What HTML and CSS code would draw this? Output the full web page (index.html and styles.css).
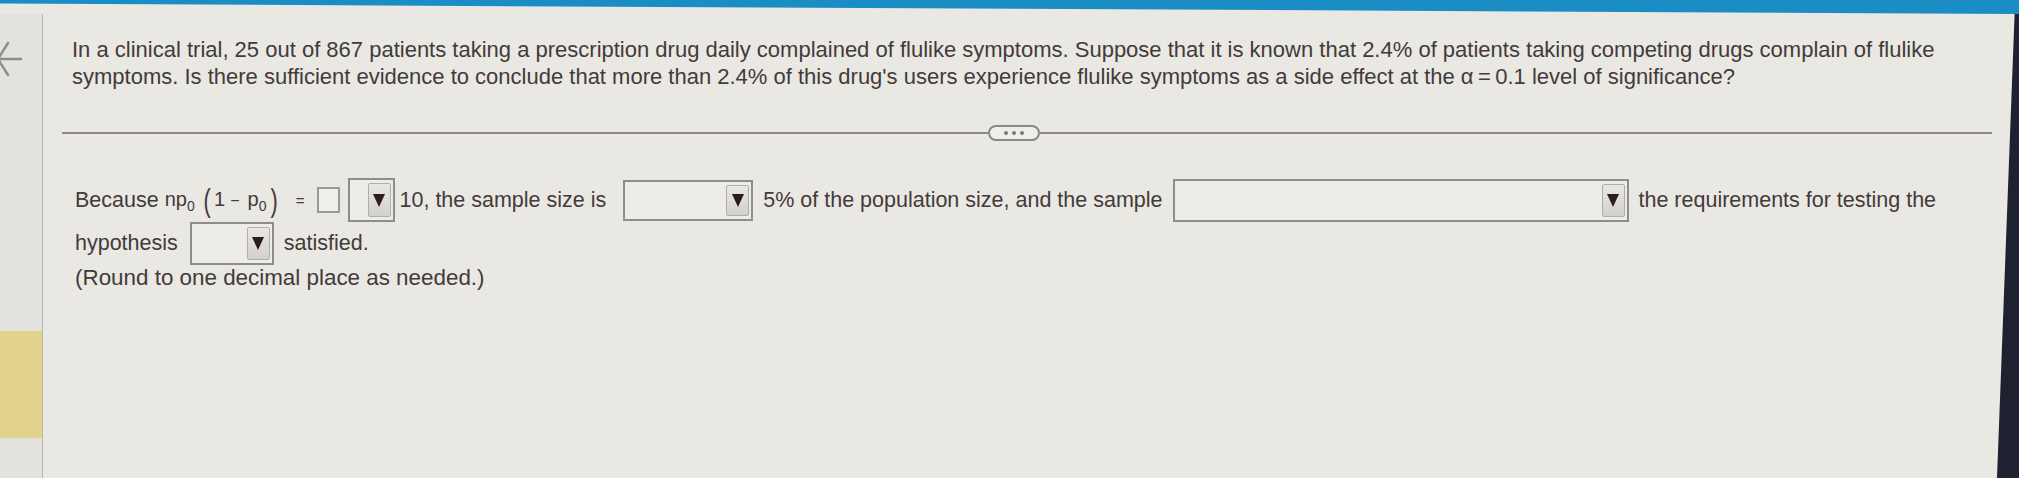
FILE: index.html
```html
<!DOCTYPE html>
<html lang="en">
<head>
<meta charset="utf-8">
<title>Hypothesis test question</title>
<link rel="stylesheet" href="styles.css">
</head>
<body>
<div class="screen">
  <div class="topbar"></div>
  <div class="frame">
    <aside class="sidebar">
      <svg class="back" viewBox="0 0 24 34" aria-hidden="true">
        <path d="M-2 17 L8 1 M-2 17 L8 33 M-2 17 L21 17" fill="none" stroke="#8f8d8a" stroke-width="2.4" stroke-linecap="round"/>
      </svg>
      <div class="flag"></div>
    </aside>
    <main class="content">
      <p class="question">In a clinical trial, 25 out of 867 patients taking a prescription drug daily complained of flulike symptoms. Suppose that it is known that 2.4% of patients taking competing drugs complain of flulike symptoms. Is there sufficient evidence to conclude that more than 2.4% of this drug's users experience flulike symptoms as a side effect at the α&#8201;=&#8201;0.1 level of significance?</p>
      <div class="divider">
        <span class="rule-l"></span>
        <span class="more"><i></i><i></i><i></i></span>
        <span class="rule-r"></span>
      </div>
      <div class="answer">
        <div class="row row-a">
          <span>Because</span>
          <span class="math">np<sub>0</sub><span class="paren open">(</span><span class="one">1</span><span class="minus">−</span>p<sub>0</sub><span class="paren close">)</span><span class="eq">=</span></span>
          <span class="box"></span>
          <span class="sel s1"><span class="btn"><i></i></span></span>
          <span class="t-10">10, the sample size is</span>
          <span class="sel s3"><span class="btn"><i></i></span></span>
          <span class="gap">5% of the population size, and the sample</span>
          <span class="sel s4"><span class="btn"><i></i></span></span>
          <span class="gap">the requirements for testing the</span>
        </div>
        <div class="row row-b">
          <span>hypothesis</span>
          <span class="sel s2"><span class="btn"><i></i></span></span>
          <span class="gap">satisfied.</span>
        </div>
        <div class="note">(Round to one decimal place as needed.)</div>
      </div>
    </main>
    <div class="edge"></div>
  </div>
</div>
</body>
</html>
```

FILE: styles.css
```css
* { box-sizing: border-box; }

html, body {
  margin: 0;
  height: 100%;
}

body {
  background: #eae8e2;
  font-family: "Liberation Sans", Arial, sans-serif;
  color: #433a3b;
  overflow: hidden;
}

.screen {
  display: flex;
  flex-direction: column;
  height: 478px;
}

.topbar {
  flex: none;
  height: 14px;
  background: #1a8dc5;
  clip-path: polygon(0 0, 100% 0, 100% 100%, 0 25%);
}

.frame {
  flex: 1;
  display: flex;
}

.sidebar {
  flex: none;
  width: 43px;
  background: #e3e2de;
  border-right: 1px solid #b9b7b2;
  display: flex;
  flex-direction: column;
}

.back {
  margin-top: 28px;
  width: 24px;
  height: 34px;
  overflow: visible;
}

.flag {
  margin-top: 255px;
  height: 107px;
  background: #e2d38c;
}

.content {
  flex: 1;
  padding: 22px 0 0 19px;
}

.edge {
  flex: none;
  width: 22px;
  background: #1d2130;
  clip-path: polygon(80% 0, 100% 0, 100% 100%, 0 100%);
}

.question {
  margin: 0;
  padding-left: 10px;
  font-size: 22px;
  line-height: 27px;
  max-width: 1910px;
}

.divider {
  display: flex;
  align-items: center;
  height: 16px;
  margin: 35px 5px 0 0;
}

.rule-l {
  width: 926px;
  height: 2px;
  background: #8d8a86;
}

.rule-r {
  flex: 1;
  height: 2px;
  background: #8d8a86;
}

.more {
  flex: none;
  width: 52px;
  height: 16px;
  border: 2px solid #8a8885;
  border-radius: 8px;
  background: #efeeea;
  display: flex;
  align-items: center;
  justify-content: center;
  gap: 4px;
}

.more i {
  width: 4px;
  height: 4px;
  border-radius: 50%;
  background: #7b7876;
}

.answer {
  margin-top: 37px;
  padding-left: 13px;
  font-size: 21.5px;
}

.row {
  display: flex;
  align-items: center;
  white-space: nowrap;
}

.row-a { height: 44px; }
.row-b { height: 43px; }

.note {
  font-size: 22.4px;
  line-height: 26px;
}

.math {
  margin-left: 6px;
  font-size: 20px;
  line-height: 24px;
}

.math sub {
  font-size: 14px;
  line-height: 0;
  vertical-align: -5px;
}

.paren {
  display: inline-block;
  line-height: 0;
  font-size: 31px;
  transform: scaleX(0.7) translateY(5px);
}

.paren.open { margin-left: 7px; }
.paren.close { margin-left: 3px; }

.one { margin-left: 2px; }

.minus {
  font-size: 16px;
  margin: 0 8px 0 5px;
}

.eq {
  font-size: 15px;
  margin-left: 16px;
}

.box {
  width: 23px;
  height: 26px;
  border: 2px solid #9a9898;
  background: #efeeea;
  margin-left: 12px;
}

.sel {
  display: flex;
  justify-content: flex-end;
  align-items: stretch;
  border: 2px solid #8e8c8d;
  background: #edece8;
  padding: 3px 2px 3px 0;
}

.s1 { width: 47px; height: 44px; margin-left: 8px; }
.s2 { width: 84px; height: 43px; margin-left: 12px; }
.s3 { width: 130px; height: 41px; margin-left: 17px; }
.s4 { width: 456px; height: 43px; margin-left: 10px; }

.btn {
  width: 23px;
  background: linear-gradient(#e8e7e4, #d2d1ce);
  border: 1px solid #b0aeac;
  border-radius: 2px;
  display: flex;
  align-items: center;
  justify-content: center;
}

.btn i {
  width: 0;
  height: 0;
  border-left: 6px solid transparent;
  border-right: 6px solid transparent;
  border-top: 13px solid #2d1b1e;
}

.t-10 { margin-left: 5px; }
.gap { margin-left: 10px; }
```
